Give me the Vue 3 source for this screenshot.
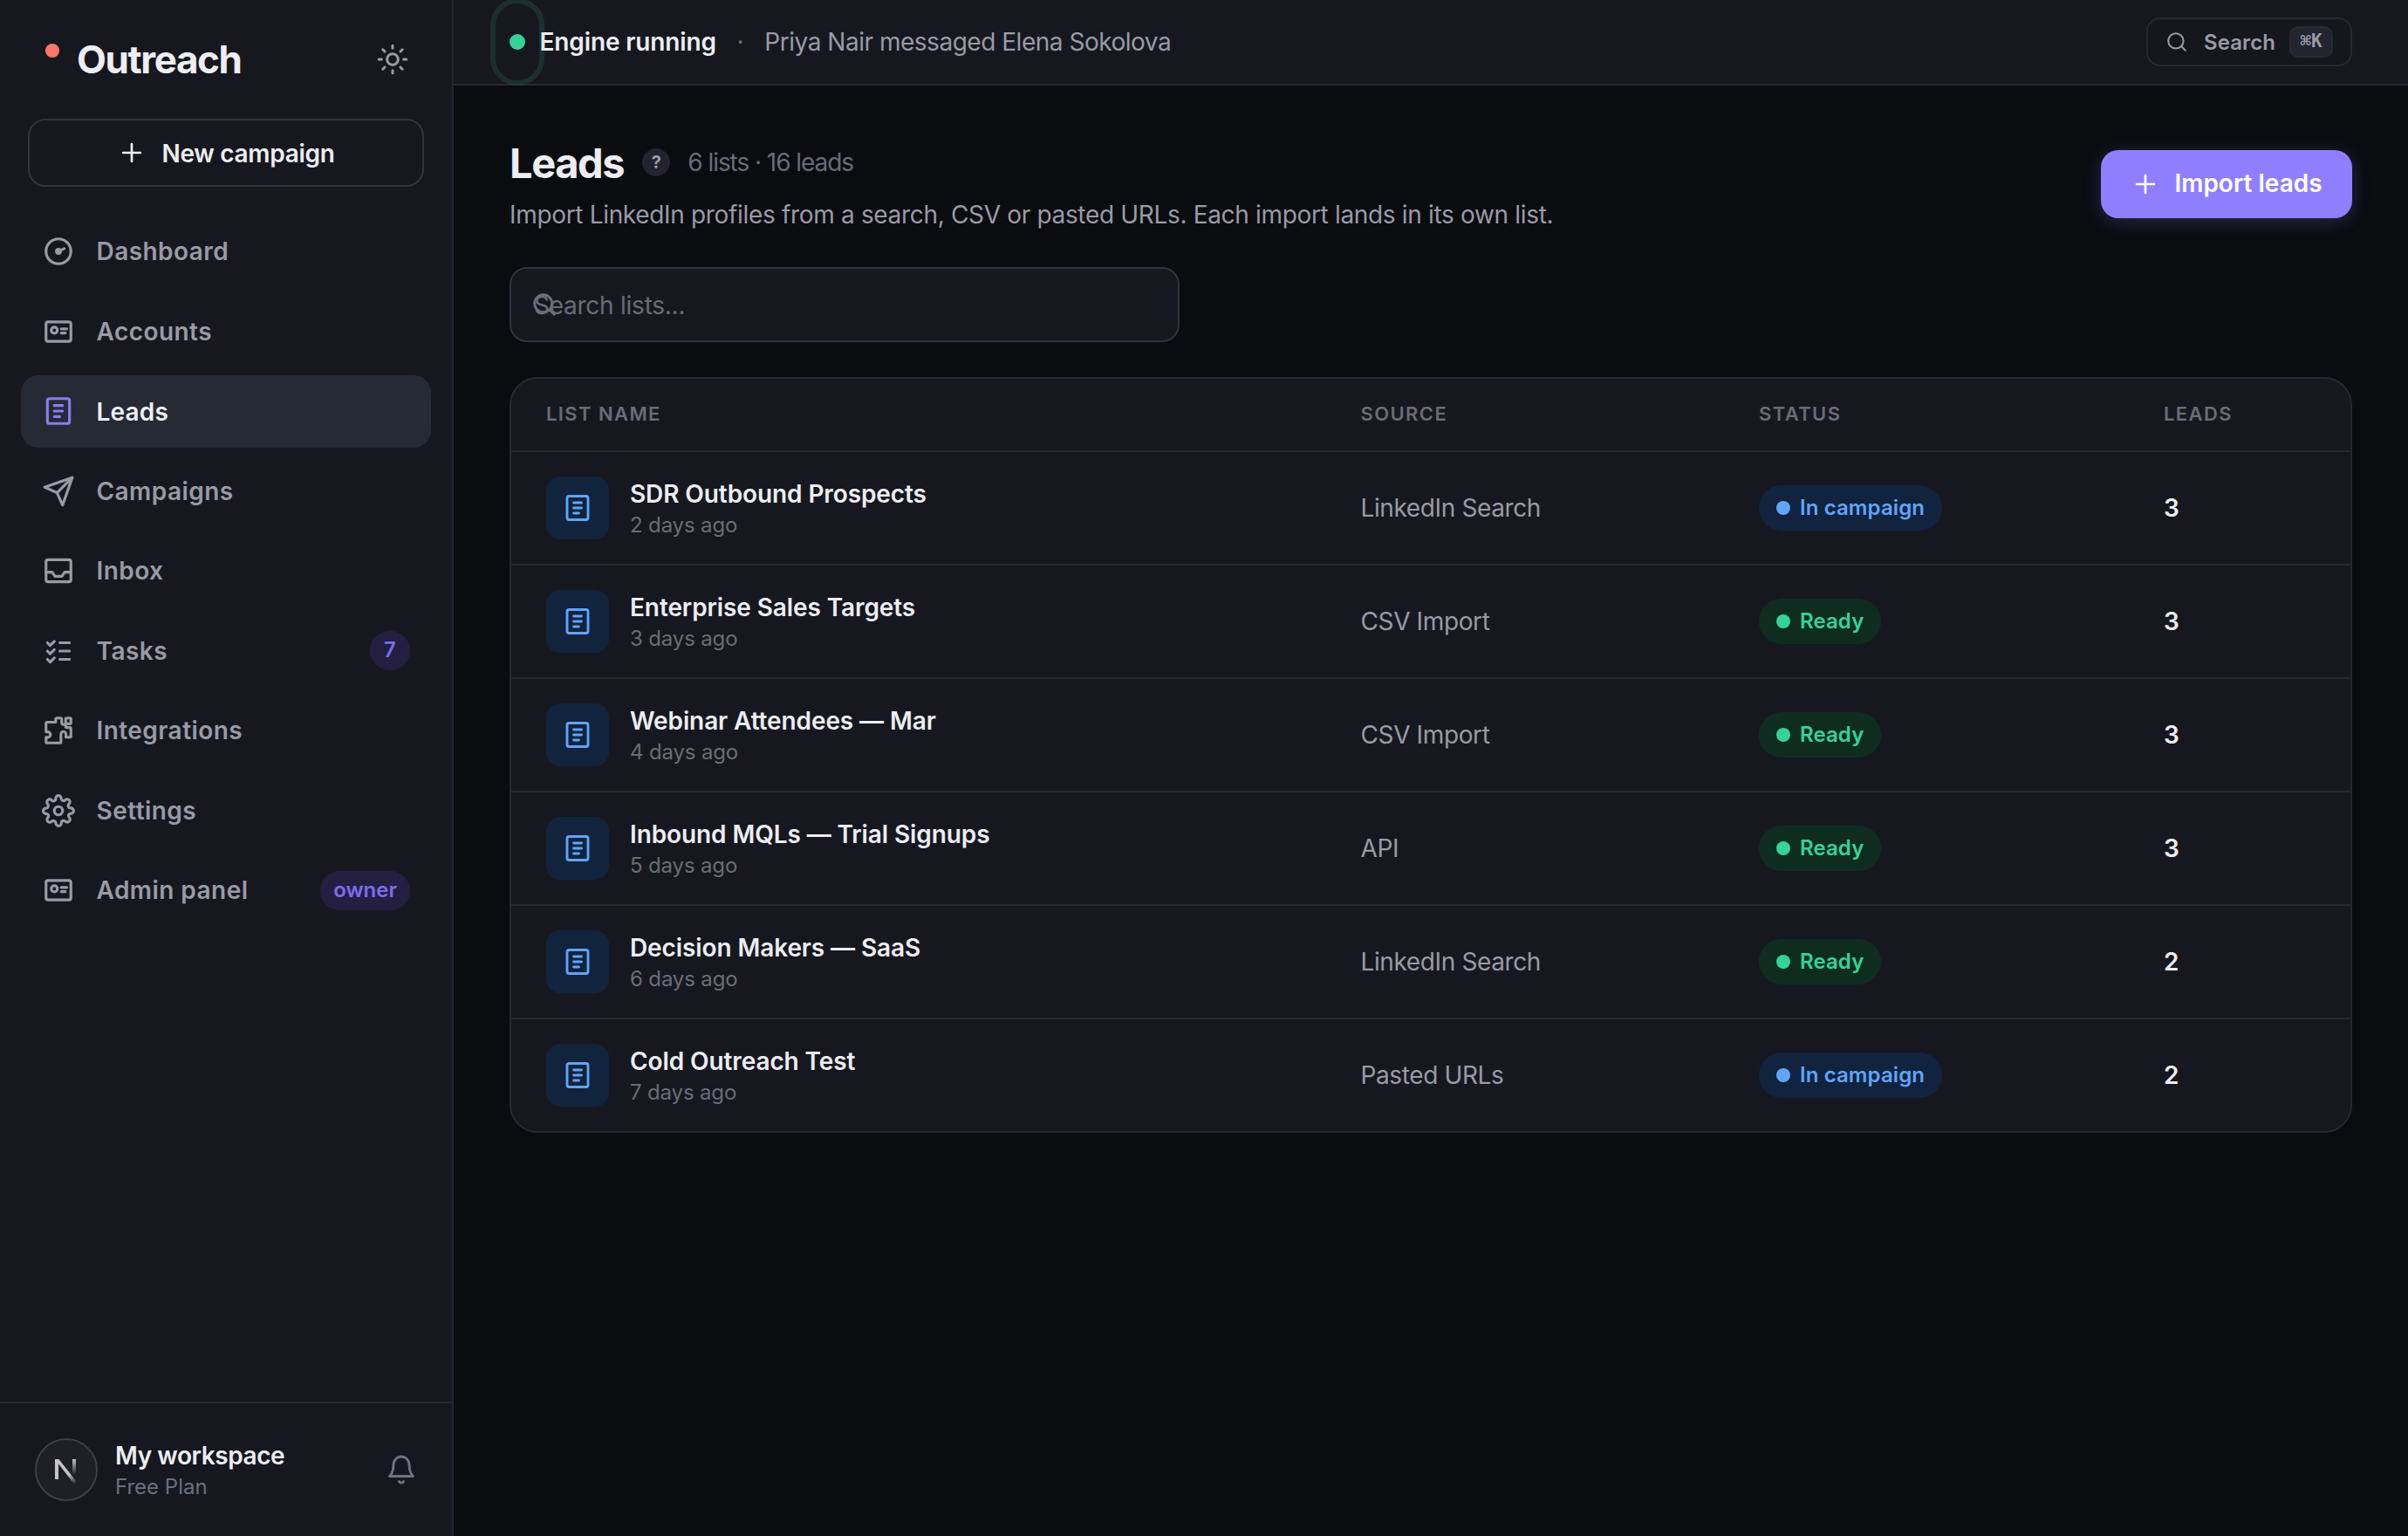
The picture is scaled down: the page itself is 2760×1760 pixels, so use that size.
<script setup>
import { ref, computed } from 'vue';

const icons = {
    dashboard: '<circle cx="12" cy="12" r="9"/><circle cx="12" cy="12" r="1.5" fill="currentColor"/><path d="M12 12l4.2-2"/>',
    card: '<rect x="3" y="5" width="18" height="14" rx="1.5"/><circle cx="9" cy="11" r="2.2"/><path d="M14 10h4M14 13h3"/>',
    list: '<rect x="4" y="3" width="16" height="18" rx="1.5"/><path d="M9 8h6M9 12h6M9 16h4"/>',
    send: '<path d="M22 2L11 13M22 2l-7 20-4-9-9-4z"/>',
    inbox: '<rect x="3" y="4" width="18" height="16" rx="1.5"/><path d="M3 13h4.5l2 3h5l2-3H21"/>',
    tasks: '<path d="M13 6h7M13 12h7M13 18h7M4 6l2 2 3-3M4 12l2 2 3-3M4 18l2 2 3-3"/>',
    puzzle: '<path d="M4 6h6V4a1 1 0 0 1 1-1h2.3a1 1 0 0 1 1 1v2.2a1.5 1.5 0 0 0 1.5 1.5h1.4V9a.9.9 0 0 0 .9.9H20a1 1 0 0 1 1 1v5a1 1 0 0 1-1 1h-2.6v-2.3a1.8 1.8 0 0 0-3.6 0V20a1 1 0 0 1-1 1H4a1 1 0 0 1-1-1v-3h1.2a2 2 0 0 0 0-4H3V7a1 1 0 0 1 1-1z"/><rect x="17.2" y="3" width="3.8" height="4.2" rx=".6"/>',
    gear: '<circle cx="12" cy="12" r="3"/><path d="M19.4 15a1.65 1.65 0 0 0 .33 1.82l.06.06a2 2 0 1 1-2.83 2.83l-.06-.06a1.65 1.65 0 0 0-2.82 1.18V21a2 2 0 0 1-4 0v-.09A1.65 1.65 0 0 0 9 19.4a1.65 1.65 0 0 0-1.82.33l-.06.06a2 2 0 1 1-2.83-2.83l.06-.06a1.65 1.65 0 0 0-1.18-2.82H3a2 2 0 0 1 0-4h.09A1.65 1.65 0 0 0 4.6 9a1.65 1.65 0 0 0-.33-1.82l-.06-.06a2 2 0 1 1 2.83-2.83l.06.06A1.65 1.65 0 0 0 10 3.09V3a2 2 0 0 1 4 0v.09a1.65 1.65 0 0 0 2.82 1.18l.06-.06a2 2 0 1 1 2.83 2.83l-.06.06A1.65 1.65 0 0 0 20.91 10H21a2 2 0 0 1 0 4h-.09a1.65 1.65 0 0 0-1.51 1z"/>',
    sun: '<circle cx="12" cy="12" r="4"/><path d="M12 2v2M12 20v2M4.93 4.93l1.41 1.41M17.66 17.66l1.41 1.41M2 12h2M20 12h2M4.93 19.07l1.41-1.41M17.66 6.34l1.41-1.41"/>',
    plus: '<path d="M12 5v14M5 12h14"/>',
    search: '<circle cx="11" cy="11" r="8"/><path d="M21 21l-4.3-4.3"/>',
    bell: '<path d="M18 8A6 6 0 0 0 6 8c0 7-3 9-3 9h18s-3-2-3-9M13.73 21a2 2 0 0 1-3.46 0"/>',
};

const navItems = [
    { label: 'Dashboard', icon: 'dashboard' },
    { label: 'Accounts', icon: 'card' },
    { label: 'Leads', icon: 'list' },
    { label: 'Campaigns', icon: 'send' },
    { label: 'Inbox', icon: 'inbox' },
    { label: 'Tasks', icon: 'tasks', badge: '7' },
    { label: 'Integrations', icon: 'puzzle' },
    { label: 'Settings', icon: 'gear' },
    { label: 'Admin panel', icon: 'card', badge: 'owner' },
];

const lists = [
    { name: 'SDR Outbound Prospects', age: '2 days ago', source: 'LinkedIn Search', status: 'In campaign', leads: 3 },
    { name: 'Enterprise Sales Targets', age: '3 days ago', source: 'CSV Import', status: 'Ready', leads: 3 },
    { name: 'Webinar Attendees — Mar', age: '4 days ago', source: 'CSV Import', status: 'Ready', leads: 3 },
    { name: 'Inbound MQLs — Trial Signups', age: '5 days ago', source: 'API', status: 'Ready', leads: 3 },
    { name: 'Decision Makers — SaaS', age: '6 days ago', source: 'LinkedIn Search', status: 'Ready', leads: 2 },
    { name: 'Cold Outreach Test', age: '7 days ago', source: 'Pasted URLs', status: 'In campaign', leads: 2 },
];

let activeItem = ref('Leads');
let query = ref('');

const visibleLists = computed(() => {
    const term = query.value.trim().toLowerCase();
    return lists.filter((list) => list.name.toLowerCase().includes(term));
});

const totalLeads = lists.reduce((sum, list) => sum + list.leads, 0);
</script>

<template>
    <div class="app">
        <aside class="sidebar">
            <div class="brand">
                <span class="brand-mark"><span class="brand-dot"></span></span>
                <span class="brand-name">Outreach</span>
                <svg class="icon sun" viewBox="0 0 24 24" v-html="icons.sun"></svg>
            </div>

            <button class="new-campaign">
                <svg class="icon plus" viewBox="0 0 24 24" v-html="icons.plus"></svg>
                <span>New campaign</span>
            </button>

            <nav class="nav">
                <a
                    v-for="item in navItems"
                    :key="item.label"
                    class="nav-item"
                    :class="{ active: item.label === activeItem }"
                    @click="activeItem = item.label"
                >
                    <svg class="icon nav-icon" viewBox="0 0 24 24" v-html="icons[item.icon]"></svg>
                    <span class="nav-label">{{ item.label }}</span>
                    <span v-if="item.badge" class="nav-badge">{{ item.badge }}</span>
                </a>
            </nav>

            <div class="workspace">
                <div class="avatar">
                    <svg class="avatar-mark" viewBox="0 0 26 29">
                        <defs>
                            <linearGradient id="diagonal" x1="16" y1="18" x2="24" y2="28" gradientUnits="userSpaceOnUse">
                                <stop offset="0" stop-color="#c4c4c8" />
                                <stop offset="1" stop-color="#c4c4c8" stop-opacity="0" />
                            </linearGradient>
                            <linearGradient id="stem" x1="0" y1="0" x2="0" y2="18" gradientUnits="userSpaceOnUse">
                                <stop offset="0" stop-color="#c4c4c8" />
                                <stop offset="1" stop-color="#c4c4c8" stop-opacity="0" />
                            </linearGradient>
                        </defs>
                        <path d="M0 0h4v23H0z" fill="#c4c4c8" />
                        <path d="M0 0h4.4L25 26l-3 2.4z" fill="url(#diagonal)" />
                        <path d="M20 0h4v18h-4z" fill="url(#stem)" />
                    </svg>
                </div>
                <div class="workspace-text">
                    <div class="workspace-name">My workspace</div>
                    <div class="workspace-plan">Free Plan</div>
                </div>
                <svg class="icon bell" viewBox="0 0 24 24" v-html="icons.bell"></svg>
            </div>
        </aside>

        <main class="main">
            <header class="topbar">
                <span class="engine-dot"></span>
                <span class="engine-label">Engine running</span>
                <span class="separator">·</span>
                <span class="activity">Priya Nair messaged Elena Sokolova</span>
                <button class="quick-search">
                    <svg class="icon search-icon" viewBox="0 0 24 24" v-html="icons.search"></svg>
                    <span>Search</span>
                    <kbd>⌘K</kbd>
                </button>
            </header>

            <section class="content">
                <div class="page-head">
                    <div>
                        <div class="title-row">
                            <h1>Leads</h1>
                            <span class="help">?</span>
                            <span class="summary">{{ lists.length }} lists · {{ totalLeads }} leads</span>
                        </div>
                        <p class="subtitle">Import LinkedIn profiles from a search, CSV or pasted URLs. Each import lands in its own list.</p>
                    </div>
                    <button class="import-btn">
                        <svg class="icon plus" viewBox="0 0 24 24" v-html="icons.plus"></svg>
                        <span>Import leads</span>
                    </button>
                </div>

                <div class="filter">
                    <svg class="icon filter-icon" viewBox="0 0 24 24" v-html="icons.search"></svg>
                    <input v-model="query" type="text" class="filter-input" placeholder="Search lists..." />
                </div>

                <div class="table">
                    <div class="row table-head">
                        <span>List name</span>
                        <span>Source</span>
                        <span>Status</span>
                        <span>Leads</span>
                    </div>
                    <div v-for="list in visibleLists" :key="list.name" class="row table-row">
                        <div class="list-cell">
                            <div class="tile">
                                <svg class="icon tile-icon" viewBox="0 0 24 24" v-html="icons.list"></svg>
                            </div>
                            <div class="list-text">
                                <div class="list-name">{{ list.name }}</div>
                                <div class="list-age">{{ list.age }}</div>
                            </div>
                        </div>
                        <span class="source">{{ list.source }}</span>
                        <div>
                            <span class="status" :class="list.status === 'Ready' ? 'ready' : 'running'">
                                <span class="status-dot"></span>{{ list.status }}
                            </span>
                        </div>
                        <span class="count">{{ list.leads }}</span>
                    </div>
                </div>
            </section>
        </main>
    </div>
</template>

<style>
body {
    margin: 0;
    background: #0b0c10;
}
</style>

<style scoped>
.app {
    display: flex;
    height: 1760px;
    font-family: Inter, "Liberation Sans", sans-serif;
    font-size: 28px;
    color: #ededf2;
    background: #0b0c10;
    overflow: hidden;
}

.app * {
    box-sizing: border-box;
}

button,
input {
    font: inherit;
    margin: 0;
}

.icon {
    flex: none;
    fill: none;
    stroke: currentColor;
    stroke-width: 1.9;
    stroke-linecap: round;
    stroke-linejoin: round;
}

.plus {
    width: 34px;
    height: 34px;
}

.sidebar {
    flex: none;
    display: flex;
    flex-direction: column;
    width: 520px;
    background: #17181f;
    border-right: 2px solid #27282e;
}

.brand {
    display: flex;
    align-items: center;
    height: 136px;
    padding: 0 49px 0 32px;
}

.brand-mark {
    position: relative;
    width: 36px;
    height: 36px;
    margin-right: 20px;
}

.brand-dot {
    position: absolute;
    top: 0;
    right: 0;
    width: 16px;
    height: 16px;
    border-radius: 50%;
    background: #ff7566;
}

.brand-name {
    flex: 1;
    font-size: 44px;
    font-weight: 700;
    letter-spacing: -1.4px;
}

.sun {
    width: 38px;
    height: 38px;
    color: #9a9aa6;
}

.new-campaign {
    display: flex;
    align-items: center;
    justify-content: center;
    gap: 17px;
    height: 78px;
    margin: 0 32px;
    padding: 0;
    color: #ededf2;
    font-weight: 600;
    letter-spacing: -0.3px;
    background: none;
    border: 2px solid #30343e;
    border-radius: 20px;
}

.new-campaign span {
    padding-top: 2px;
}

.nav {
    flex: 1;
    display: flex;
    flex-direction: column;
    gap: 9px;
    padding: 33px 24px 0;
}

.nav-item {
    display: flex;
    align-items: center;
    height: 82.5px;
    padding: 0 24px;
    border-radius: 20px;
    color: #9a9aa6;
    font-weight: 560;
    cursor: pointer;
}

.nav-item.active {
    background: #262a34;
    color: #ededf2;
    font-weight: 600;
}

.nav-icon {
    width: 38px;
    height: 38px;
    margin-right: 24.5px;
    stroke-width: 2;
}

.active .nav-icon {
    color: #8b7cf0;
}

.nav-label {
    flex: 1;
    letter-spacing: 0.45px;
}

.active .nav-label {
    padding-top: 1px;
    letter-spacing: 0.2px;
}

.nav-badge {
    min-width: 46px;
    height: 45px;
    padding: 0 15px;
    border-radius: 23px;
    background: #241f41;
    color: #7c6cea;
    font-size: 24px;
    font-weight: 600;
    line-height: 44px;
    text-align: center;
}

.workspace {
    display: flex;
    align-items: center;
    height: 154px;
    padding: 0 40px;
    border-top: 2px solid #27282e;
}

.avatar {
    display: flex;
    width: 72px;
    height: 72px;
    margin-right: 20px;
    padding: 22px 0 0 21px;
    border: 2px solid #3f3f45;
    border-radius: 50%;
    background: #1f2026;
}

.avatar-mark {
    width: 26px;
    height: 29px;
}

.workspace-text {
    flex: 1;
    padding-top: 2px;
}

.workspace-name {
    font-weight: 600;
    line-height: 36px;
    letter-spacing: -0.42px;
}

.workspace-plan {
    margin-top: 2px;
    font-size: 24px;
    line-height: 32px;
    color: #6b6f7e;
}

.bell {
    width: 36px;
    height: 36px;
    color: #6e7482;
}

.main {
    flex: 1;
    min-width: 0;
}

.topbar {
    display: flex;
    align-items: center;
    height: 98px;
    padding: 0 64px;
    background: #17181f;
    border-bottom: 2px solid #27282e;
}

.engine-dot {
    position: relative;
    width: 18px;
    height: 18px;
    border-radius: 50%;
    background: #34d399;
}

/* pulse ring around the engine indicator */
.engine-dot::after {
    content: '';
    position: absolute;
    top: -41px;
    left: -22px;
    width: 62px;
    height: 100px;
    border: 6px solid rgba(52, 211, 153, 0.12);
    border-radius: 31px;
    box-sizing: border-box;
}

.engine-label {
    margin-left: 16.5px;
    font-weight: 600;
    letter-spacing: -0.13px;
}

.separator {
    width: 55.5px;
    text-align: center;
    color: #6b6b78;
}

.activity {
    flex: 1;
    color: #9a9aa6;
    letter-spacing: -0.48px;
}

.quick-search {
    display: flex;
    align-items: center;
    width: 236px;
    height: 56px;
    padding: 0 20px;
    color: #9a9aa6;
    font-size: 24px;
    font-weight: 560;
    letter-spacing: 0.1px;
    background: #16171c;
    border: 2px solid #28292e;
    border-radius: 16px;
}

.search-icon {
    width: 26px;
    height: 26px;
    margin-right: 18px;
}

.quick-search kbd {
    width: 50px;
    height: 36px;
    margin-left: auto;
    border: 2px solid #282a31;
    border-radius: 10px;
    background: #22242e;
    font-family: "DejaVu Sans Mono", monospace;
    font-size: 21px;
    font-weight: 700;
    line-height: 30px;
    text-align: center;
}

.content {
    padding: 60px 64px 0;
}

.page-head {
    display: flex;
    justify-content: space-between;
    align-items: flex-start;
}

.title-row {
    display: flex;
    align-items: center;
    height: 56px;
}

h1 {
    margin: 0;
    font-size: 47px;
    font-weight: 700;
    letter-spacing: -1.4px;
}

.help {
    width: 32px;
    height: 32px;
    margin: 0 20px 0 21px;
    border-radius: 50%;
    background: #22232d;
    color: #9a9aa6;
    font-size: 20px;
    font-weight: 700;
    line-height: 32px;
    text-align: center;
}

.summary {
    color: #6b6b78;
    letter-spacing: -1.05px;
}

.subtitle {
    margin: 11px 0 0;
    line-height: 42px;
    letter-spacing: -0.33px;
    color: #9a9aa6;
}

.import-btn {
    display: flex;
    align-items: center;
    justify-content: center;
    gap: 16px;
    width: 288px;
    height: 78px;
    margin-top: 14px;
    padding: 0;
    border: none;
    border-radius: 20px;
    background: #8f7fff;
    color: #fff;
    font-weight: 600;
    box-shadow: 0 4px 20px rgba(139, 124, 255, 0.24);
}

.import-btn span {
    padding-bottom: 2px;
}

.filter {
    position: relative;
    width: 768px;
    margin-top: 39px;
}

.filter-icon {
    position: absolute;
    top: 28px;
    left: 25px;
    width: 30px;
    height: 30px;
    color: #6b6f7c;
    stroke-width: 2.3;
}

.filter-input {
    display: block;
    width: 100%;
    height: 86px;
    padding: 2px 26px 0;
    border: 2px solid #30343e;
    border-radius: 20px;
    outline: none;
    background: #17181f;
    color: #ededf2;
    letter-spacing: -0.25px;
}

.filter-input::placeholder {
    color: #6b6b78;
    opacity: 1;
}

.table {
    margin-top: 40px;
    border: 2px solid #27282e;
    border-radius: 32px;
    background: #17181f;
    overflow: hidden;
}

.row {
    display: grid;
    grid-template-columns: 933.5px 456.5px 464px 1fr;
    align-items: center;
    padding-left: 40px;
}

.table-head {
    height: 84px;
    padding-bottom: 2px;
    border-bottom: 2px solid #27282e;
    color: #6b6b78;
    font-size: 22px;
    font-weight: 600;
    letter-spacing: 1.4px;
    text-transform: uppercase;
}

.table-row {
    height: 130px;
    border-bottom: 2px solid #27282e;
}

.table-row:last-child {
    height: 128px;
    border-bottom: none;
}

.list-cell {
    display: flex;
    align-items: center;
}

.tile {
    display: flex;
    align-items: center;
    justify-content: center;
    width: 72px;
    height: 72px;
    margin-right: 24px;
    border-radius: 16px;
    background: #11233d;
}

.tile-icon {
    width: 36px;
    height: 36px;
    color: #60a5fa;
}

.list-text {
    padding-top: 2px;
}

.list-name {
    font-weight: 600;
    line-height: 36px;
    letter-spacing: -0.1px;
}

.list-age {
    margin-top: 2px;
    font-size: 24px;
    line-height: 32px;
    letter-spacing: -0.15px;
    color: #6b6b78;
}

.source {
    color: #9a9aa6;
    letter-spacing: -0.38px;
}

.status {
    display: inline-flex;
    align-items: center;
    gap: 11px;
    height: 52px;
    padding: 0 20px;
    border-radius: 26px;
    font-size: 24px;
    font-weight: 600;
    line-height: 28px;
    letter-spacing: 0.1px;
    vertical-align: middle;
}

.status-dot {
    width: 16px;
    height: 16px;
    border-radius: 50%;
    background: currentColor;
}

.running {
    background: #11233f;
    color: #60a5fa;
}

.ready {
    background: #0e2d20;
    color: #34d399;
}

.count {
    font-weight: 600;
}
</style>
